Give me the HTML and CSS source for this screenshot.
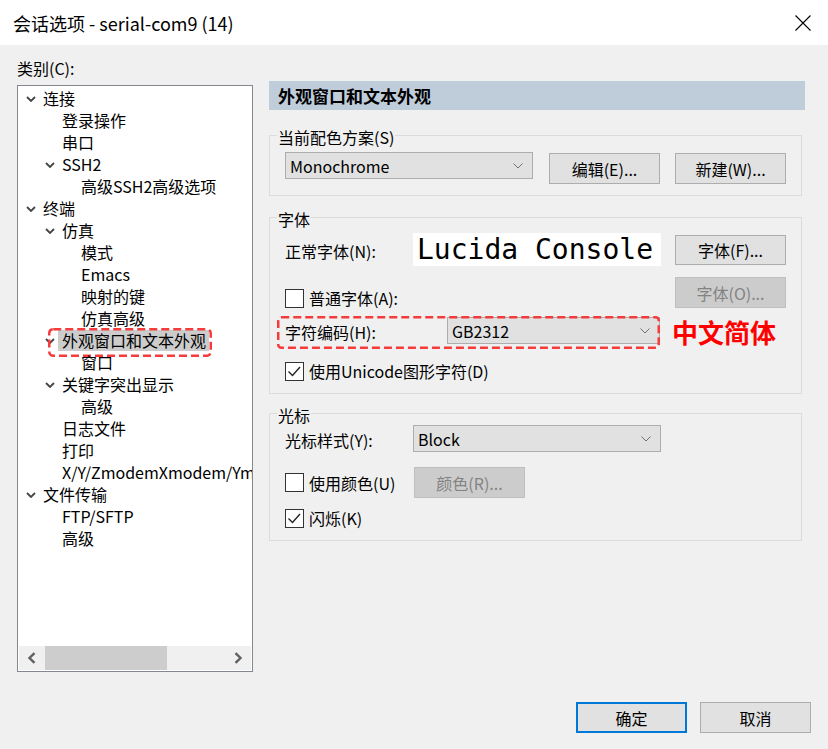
FILE: index.html
```html
<!DOCTYPE html>
<html lang="zh-CN">
<head>
<meta charset="utf-8">
<title>会话选项</title>
<link rel="stylesheet" href="styles.css">
</head>
<body>
<div class="dialog">
  <div class="titlebar">
    <span class="title">会话选项 - serial-com9 (14)</span>
    <svg class="close" width="16" height="16" viewBox="0 0 16 16"><path d="M0.5 0.5L15.5 15.5M15.5 0.5L0.5 15.5" stroke="#000" stroke-width="1.1" fill="none"/></svg>
  </div>

  <div class="main">
    <div class="left">
      <div class="cat-label">类别(C):</div>
      <div class="tree">
        <div class="tree-list">
          <div class="row l0"><span class="chev"><svg width="10" height="6" viewBox="0 0 10 6"><path d="M1 1L5 5L9 1" stroke="#444" stroke-width="1.8" fill="none"/></svg></span><span class="txt">连接</span></div>
          <div class="row l1"><span class="chev"></span><span class="txt">登录操作</span></div>
          <div class="row l1"><span class="chev"></span><span class="txt">串口</span></div>
          <div class="row l1"><span class="chev"><svg width="10" height="6" viewBox="0 0 10 6"><path d="M1 1L5 5L9 1" stroke="#444" stroke-width="1.8" fill="none"/></svg></span><span class="txt">SSH2</span></div>
          <div class="row l2"><span class="chev"></span><span class="txt">高级SSH2高级选项</span></div>
          <div class="row l0"><span class="chev"><svg width="10" height="6" viewBox="0 0 10 6"><path d="M1 1L5 5L9 1" stroke="#444" stroke-width="1.8" fill="none"/></svg></span><span class="txt">终端</span></div>
          <div class="row l1"><span class="chev"><svg width="10" height="6" viewBox="0 0 10 6"><path d="M1 1L5 5L9 1" stroke="#444" stroke-width="1.8" fill="none"/></svg></span><span class="txt">仿真</span></div>
          <div class="row l2"><span class="chev"></span><span class="txt">模式</span></div>
          <div class="row l2"><span class="chev"></span><span class="txt">Emacs</span></div>
          <div class="row l2"><span class="chev"></span><span class="txt">映射的键</span></div>
          <div class="row l2"><span class="chev"></span><span class="txt">仿真高级</span></div>
          <div class="row l1 selected"><span class="chev"><svg width="10" height="6" viewBox="0 0 10 6"><path d="M1 1L5 5L9 1" stroke="#444" stroke-width="1.8" fill="none"/></svg></span><span class="txt">外观窗口和文本外观</span>
            <svg class="mark mark-tree" width="164" height="29" viewBox="0 0 164 29"><rect x="1.25" y="1.25" width="161.5" height="26.5" rx="4" fill="none" stroke="#f53b3b" stroke-width="2.5" stroke-dasharray="8 4"/></svg>
          </div>
          <div class="row l2"><span class="chev"></span><span class="txt">窗口</span></div>
          <div class="row l1"><span class="chev"><svg width="10" height="6" viewBox="0 0 10 6"><path d="M1 1L5 5L9 1" stroke="#444" stroke-width="1.8" fill="none"/></svg></span><span class="txt">关键字突出显示</span></div>
          <div class="row l2"><span class="chev"></span><span class="txt">高级</span></div>
          <div class="row l1"><span class="chev"></span><span class="txt">日志文件</span></div>
          <div class="row l1"><span class="chev"></span><span class="txt">打印</span></div>
          <div class="row l1"><span class="chev"></span><span class="txt">X/Y/ZmodemXmodem/Ymodem</span></div>
          <div class="row l0"><span class="chev"><svg width="10" height="6" viewBox="0 0 10 6"><path d="M1 1L5 5L9 1" stroke="#444" stroke-width="1.8" fill="none"/></svg></span><span class="txt">文件传输</span></div>
          <div class="row l1"><span class="chev"></span><span class="txt">FTP/SFTP</span></div>
          <div class="row l1"><span class="chev"></span><span class="txt">高级</span></div>
        </div>
        <div class="hscroll">
          <span class="sarrow"><svg width="10" height="12" viewBox="0 0 10 12"><path d="M7.5 1.2L2.5 6L7.5 10.8" stroke="#606060" stroke-width="2.4" fill="none"/></svg></span>
          <span class="strack"><span class="sthumb"></span></span>
          <span class="sarrow"><svg width="10" height="12" viewBox="0 0 10 12"><path d="M2.5 1.2L7.5 6L2.5 10.8" stroke="#606060" stroke-width="2.4" fill="none"/></svg></span>
        </div>
      </div>
    </div>

    <div class="right">
      <div class="page-header">外观窗口和文本外观</div>

      <fieldset class="group g1">
        <legend>当前配色方案(S)</legend>
        <div class="frow r-scheme">
          <div class="combo w-scheme"><span>Monochrome</span><svg class="carrow" width="10" height="6" viewBox="0 0 10 6"><path d="M0.5 0.5L5 5L9.5 0.5" stroke="#707070" stroke-width="1" fill="none"/></svg></div>
          <div class="btn b-edit">编辑(E)...</div>
          <div class="btn b-new">新建(W)...</div>
        </div>
      </fieldset>

      <fieldset class="group g2">
        <legend>字体</legend>
        <div class="frow r-font">
          <span class="lbl w128">正常字体(N):</span>
          <div class="font-preview">Lucida Console</div>
          <div class="btn b-font">字体(F)...</div>
        </div>
        <div class="frow r-alt">
          <label class="check top10"><span class="box"></span><span>普通字体(A):</span></label>
          <div class="btn disabled push">字体(O)...</div>
        </div>
        <div class="frow r-enc">
          <span class="lbl w162">字符编码(H):</span>
          <div class="combo w-enc"><span>GB2312</span><svg class="carrow" width="10" height="6" viewBox="0 0 10 6"><path d="M0.5 0.5L5 5L9.5 0.5" stroke="#707070" stroke-width="1" fill="none"/></svg></div>
          <span class="note">中文简体</span>
          <svg class="mark mark-enc" width="383" height="33" viewBox="0 0 383 33"><rect x="1.25" y="1.25" width="380.5" height="30.5" rx="3" fill="none" stroke="#f53b3b" stroke-width="2.5" stroke-dasharray="8 4"/></svg>
        </div>
        <div class="frow r-uni">
          <label class="check"><span class="box"><svg width="17" height="17" viewBox="0 0 17 17"><path d="M2.5 8.5L6.5 12.5L14 4" stroke="#222" stroke-width="1.4" fill="none"/></svg></span><span>使用Unicode图形字符(D)</span></label>
        </div>
      </fieldset>

      <fieldset class="group g3">
        <legend>光标</legend>
        <div class="frow r-cur">
          <span class="lbl w128">光标样式(Y):</span>
          <div class="combo w-cur"><span>Block</span><svg class="carrow" width="10" height="6" viewBox="0 0 10 6"><path d="M0.5 0.5L5 5L9.5 0.5" stroke="#707070" stroke-width="1" fill="none"/></svg></div>
        </div>
        <div class="frow r-color">
          <label class="check w129"><span class="box"></span><span>使用颜色(U)</span></label>
          <div class="btn disabled">颜色(R)...</div>
        </div>
        <div class="frow r-blink">
          <label class="check"><span class="box"><svg width="17" height="17" viewBox="0 0 17 17"><path d="M2.5 8.5L6.5 12.5L14 4" stroke="#222" stroke-width="1.4" fill="none"/></svg></span><span>闪烁(K)</span></label>
        </div>
      </fieldset>
    </div>
  </div>

  <div class="footer">
    <div class="btn btn-default">确定</div>
    <div class="btn">取消</div>
  </div>
</div>
</body>
</html>
```

FILE: styles.css
```css
* { box-sizing: border-box; }

html, body {
  margin: 0;
  padding: 0;
}

body {
  width: 828px;
  height: 749px;
  overflow: hidden;
  background: #f0f0f0;
  font-family: "Noto Sans CJK SC", "Noto Sans", sans-serif;
  font-size: 16px;
  color: #000;
}

.titlebar {
  height: 45px;
  background: #fff;
  display: flex;
  align-items: center;
  padding: 0 17px 0 13px;
  font-size: 18px;
}

.title {
  flex: 1;
  line-height: 24px;
}

.close {
  display: block;
  flex: none;
}

.main {
  display: grid;
  grid-template-columns: 236px 536px;
  column-gap: 16px;
  padding: 12px 0 0 17px;
}

.cat-label {
  height: 28px;
  line-height: 22px;
}

/* tree */
.tree {
  height: 587px;
  border: 1px solid #828790;
  background: #fff;
  display: flex;
  flex-direction: column;
}

.tree-list {
  flex: 1;
  padding-top: 1px;
  overflow: hidden;
}

.row {
  height: 22px;
  line-height: 22px;
  display: flex;
  align-items: center;
  white-space: nowrap;
  position: relative;
}

.row.l1 { padding-left: 19px; }
.row.l2 { padding-left: 38px; }

.chev {
  width: 25px;
  flex: none;
  display: flex;
  justify-content: center;
  align-items: center;
  padding-top: 1px;
}

.chev svg { display: block; }

.selected .txt {
  background: #cccccc;
  padding: 0 3px 0 4px;
  margin-left: -4px;
  height: 21px;
  line-height: 21px;
}

.mark {
  position: absolute;
  display: block;
  pointer-events: none;
}

.mark-tree {
  left: 30px;
  top: -1px;
}

.hscroll {
  height: 24px;
  margin: 1px;
  background: #f0f0f0;
  display: flex;
  flex: none;
}

.sarrow {
  width: 26px;
  display: flex;
  align-items: center;
  justify-content: center;
  flex: none;
}

.strack {
  flex: 1;
  display: flex;
}

.sthumb {
  width: 122px;
  background: #cdcdcd;
}

/* right side */
.page-header {
  margin-top: 24px;
  height: 29px;
  line-height: 29px;
  background: #bfcddb;
  font-weight: 700;
  font-size: 17px;
  padding-left: 9px;
}

.group {
  margin: 0;
  width: 533px;
  min-width: 0;
  border: 1px solid #dcdcdc;
  padding: 0 15px;
}

.group legend {
  margin-left: -8px;
  padding: 4px 1px 0 1px;
  line-height: 18px;
  font-size: 16px;
}

.g1 { margin-top: 14px; padding-top: 6px; padding-bottom: 11px; }
.g2 { margin-top: 10px; padding-top: 5px; padding-bottom: 12px; }
.g3 { margin-top: 8px; padding-top: 1px; padding-bottom: 12px; }

.frow {
  display: flex;
  align-items: center;
  position: relative;
}

.lbl {
  flex: none;
  line-height: 22px;
  padding-top: 3px;
}

.w128 { width: 128px; }
.w162 { width: 162px; }
.w129 { width: 129px; }

.combo {
  flex: none;
  height: 27px;
  border: 1px solid #adadad;
  background: #e1e1e1;
  display: flex;
  align-items: center;
  justify-content: space-between;
  padding: 0 9px 0 4px;
  line-height: 22px;
}

.carrow { display: block; flex: none; }

.w-scheme { width: 248px; }
.w-enc { width: 213px; }
.w-cur { width: 248px; }

.btn {
  flex: none;
  width: 111px;
  height: 31px;
  border: 1px solid #adadad;
  background: #e1e1e1;
  display: flex;
  align-items: center;
  justify-content: center;
  line-height: 22px;
}

.btn.disabled {
  background: #cccccc;
  border-color: #bfbfbf;
  color: #838383;
}

.btn-default {
  border: 2px solid #0078d7;
}

/* group 1 */
.r-scheme {
  height: 32px;
  align-items: flex-start;
}

.b-edit { margin-top: 1px; margin-left: 16px; }
.b-new { margin-top: 1px; margin-left: 15px; }

/* group 2 */
.r-font { height: 33px; }

.font-preview {
  flex: none;
  width: 248px;
  height: 33px;
  background: #fff;
  font-family: "DejaVu Sans Mono", "Liberation Mono", monospace;
  font-size: 28px;
  line-height: 33px;
  padding-left: 4px;
  white-space: nowrap;
  overflow: hidden;
}

.b-font { height: 30px; margin-left: 14px; }

.r-alt {
  height: 31px;
  margin-top: 11px;
  align-items: flex-start;
}

.push { margin-left: auto; }

.r-enc {
  height: 27px;
  margin-top: 9px;
}

.note {
  margin-left: 12px;
  color: #ff0000;
  font-size: 26px;
  font-weight: 700;
  line-height: 27px;
  white-space: nowrap;
  padding-top: 2px;
}

.mark-enc {
  left: -8px;
  top: -1px;
}

.r-uni {
  height: 20px;
  margin-top: 17px;
}

/* checkbox */
.check {
  display: flex;
  align-items: center;
  gap: 5px;
  line-height: 22px;
  flex: none;
}

.top10 { margin-top: 10px; }

.box {
  width: 19px;
  height: 19px;
  border: 1px solid #333;
  background: #fff;
  flex: none;
  display: block;
}

.box svg { display: block; }

/* group 3 */
.r-cur { height: 27px; }

.r-color {
  height: 31px;
  margin-top: 15px;
}

.r-blink {
  height: 20px;
  margin-top: 10px;
}

/* footer */
.footer {
  display: flex;
  justify-content: flex-end;
  gap: 13px;
  padding-right: 17px;
  margin-top: 30px;
}
```
